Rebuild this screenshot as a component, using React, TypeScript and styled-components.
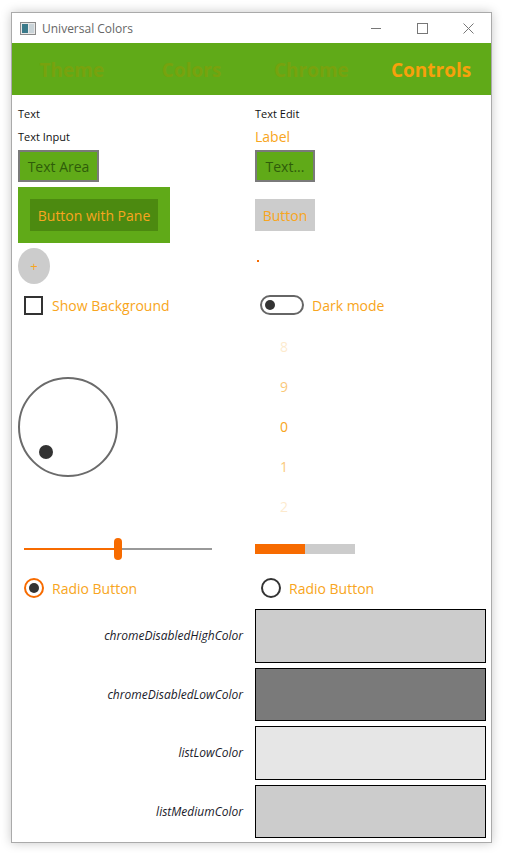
import styled, { createGlobalStyle } from 'styled-components';

const GREEN = '#60aa18';
const ORANGE = '#f8a520';
const ACCENT = '#f76b00';

const GlobalStyle = createGlobalStyle`
  html, body {
    margin: 0;
    padding: 0;
    background: #ffffff;
  }
  body {
    font-family: "Open Sans", "Noto Sans", sans-serif;
  }
`;

const Page = styled.div`
  width: 506px;
  height: 853px;
  padding: 12px 0 0 11px;
  box-sizing: border-box;
`;

const Window = styled.div`
  width: 481px;
  height: 831px;
  box-sizing: border-box;
  border: 1px solid #aaaaaa;
  box-shadow: 0 0 10px rgba(0, 0, 0, 0.22);
  background: #ffffff;
  display: flex;
  flex-direction: column;
  overflow: hidden;
`;

const TitleBar = styled.div`
  height: 30px;
  display: flex;
  align-items: center;
  padding-left: 8px;
  color: #666666;
  font-size: 12px;
`;

const TitleText = styled.span`
  margin-left: 6px;
  flex: 1;
`;

const WinButton = styled.div`
  width: 46px;
  height: 30px;
  display: flex;
  align-items: center;
  justify-content: center;
`;

const TabBar = styled.div`
  height: 52px;
  background: ${GREEN};
  display: grid;
  grid-template-columns: repeat(4, 1fr);
  align-items: center;
`;

const Tab = styled.div<{ $active?: boolean }>`
  text-align: center;
  font-size: 19px;
  font-weight: 700;
  color: ${(p) => (p.$active ? '#f7a10c' : '#78a20e')};
  padding-top: 2px;
`;

const Content = styled.div`
  padding: 8px 0 0 6px;
  display: flex;
  flex-direction: column;
`;

const Row = styled.div<{ $h: number; $mt?: number }>`
  display: grid;
  grid-template-columns: 237px 1fr;
  align-items: center;
  height: ${(p) => p.$h}px;
  margin-top: ${(p) => p.$mt ?? 0}px;
`;

const Cell = styled.div`
  display: flex;
  align-items: center;
  height: 100%;
`;

const Caption = styled.div`
  font-size: 11px;
  color: #111111;
`;

const OrangeText = styled.span`
  font-size: 14px;
  color: ${ORANGE};
`;

const GreenBox = styled.div<{ $w: number }>`
  width: ${(p) => p.$w}px;
  height: 32px;
  box-sizing: border-box;
  border: 2px solid #7a7a7a;
  background: ${GREEN};
  color: #2f5c0a;
  font-size: 14px;
  display: flex;
  align-items: center;
  justify-content: center;
`;

const Pane = styled.div`
  width: 152px;
  height: 56px;
  background: ${GREEN};
  display: flex;
  align-items: center;
  justify-content: center;
`;

const PaneButton = styled.div`
  width: 128px;
  height: 32px;
  background: #4c8a10;
  color: ${ORANGE};
  font-size: 14px;
  display: flex;
  align-items: center;
  justify-content: center;
`;

const GrayButton = styled.div`
  width: 60px;
  height: 32px;
  background: #cccccc;
  color: ${ORANGE};
  font-size: 14px;
  display: flex;
  align-items: center;
  justify-content: center;
`;

const RoundButton = styled.div`
  width: 32px;
  height: 36px;
  border-radius: 50%;
  background: #cccccc;
  color: ${ORANGE};
  font-size: 13px;
  display: flex;
  align-items: center;
  justify-content: center;
`;

const Dot = styled.div`
  width: 2px;
  height: 2px;
  background: ${ACCENT};
  margin: 0 0 10px 2px;
`;

const Check = styled.div`
  width: 19px;
  height: 19px;
  box-sizing: border-box;
  border: 2px solid #333333;
  margin: 0 9px 0 6px;
`;

const Toggle = styled.div`
  width: 44px;
  height: 20px;
  box-sizing: border-box;
  border: 2px solid #666666;
  border-radius: 10px;
  display: flex;
  align-items: center;
  padding-left: 3px;
  margin: 0 8px 0 5px;
`;

const Knob = styled.div`
  width: 10px;
  height: 10px;
  border-radius: 50%;
  background: #333333;
`;

const Tumbler = styled.div`
  width: 58px;
  display: flex;
  flex-direction: column;
  align-items: center;
`;

const TumblerItem = styled.div<{ $o: number }>`
  height: 40px;
  line-height: 40px;
  font-size: 14px;
  color: ${ORANGE};
  opacity: ${(p) => p.$o};
`;

const Slider = styled.div`
  width: 188px;
  margin-left: 6px;
  height: 22px;
  display: flex;
  align-items: center;
`;

const Track = styled.div<{ $color: string }>`
  height: 2px;
  flex: ${(p) => (p.$color === ACCENT ? '0 0 90px' : '1')};
  background: ${(p) => p.$color};
`;

const Thumb = styled.div`
  width: 8px;
  height: 22px;
  border-radius: 4px;
  background: ${ACCENT};
`;

const Progress = styled.div`
  width: 100px;
  height: 10px;
  background: #cccccc;
`;

const Radio = styled.div<{ $checked?: boolean }>`
  width: 20px;
  height: 20px;
  box-sizing: border-box;
  border-radius: 50%;
  border: 2px solid ${(p) => (p.$checked ? ACCENT : '#333333')};
  display: flex;
  align-items: center;
  justify-content: center;
  margin: 0 8px 0 6px;
`;

const RadioDot = styled.div`
  width: 10px;
  height: 10px;
  border-radius: 50%;
  background: #333333;
`;

const Swatches = styled.div`
  display: flex;
  flex-direction: column;
  gap: 5px;
  margin-top: 9px;
`;

const SwatchRow = styled.div`
  display: grid;
  grid-template-columns: 225px 231px;
  column-gap: 12px;
  align-items: center;
`;

const SwatchLabel = styled.div`
  text-align: right;
  font-size: 12px;
  font-style: italic;
  color: #1a1a2a;
`;

const SwatchBox = styled.div<{ $bg: string }>`
  height: 53.5px;
  box-sizing: border-box;
  border: 1.5px solid #000000;
  background: ${(p) => p.$bg};
`;

const swatches = [
  { name: 'chromeDisabledHighColor', bg: '#cccccc' },
  { name: 'chromeDisabledLowColor', bg: '#7a7a7a' },
  { name: 'listLowColor', bg: '#e6e6e6' },
  { name: 'listMediumColor ', bg: '#cccccc' },
];

const tumbler = [
  { n: '8', o: 0.22 },
  { n: '9', o: 0.6 },
  { n: '0', o: 1 },
  { n: '1', o: 0.6 },
  { n: '2', o: 0.22 },
];

export default function App() {
  return (
    <>
      <GlobalStyle />
      <Page>
        <Window>
          <TitleBar>
            <svg width="16" height="13" viewBox="0 0 16 13">
              <rect x="0.5" y="0.5" width="15" height="12" fill="#e8e8e8" stroke="#8a8a8a" />
              <rect x="2" y="2" width="6" height="9" fill="#3b7a8a" />
              <rect x="9" y="2" width="5" height="9" fill="#c9d3d8" />
            </svg>
            <TitleText>Universal Colors</TitleText>
            <WinButton>
              <svg width="10" height="10" viewBox="0 0 10 10">
                <line x1="0" y1="5.5" x2="10" y2="5.5" stroke="#777" strokeWidth="1" />
              </svg>
            </WinButton>
            <WinButton>
              <svg width="11" height="11" viewBox="0 0 11 11">
                <rect x="0.5" y="0.5" width="10" height="10" fill="none" stroke="#777" strokeWidth="1" />
              </svg>
            </WinButton>
            <WinButton>
              <svg width="11" height="11" viewBox="0 0 11 11">
                <path d="M0.5 0.5 L10.5 10.5 M10.5 0.5 L0.5 10.5" stroke="#777" strokeWidth="1" />
              </svg>
            </WinButton>
          </TitleBar>
          <TabBar>
            <Tab>Theme</Tab>
            <Tab>Colors</Tab>
            <Tab>Chrome</Tab>
            <Tab $active>Controls</Tab>
          </TabBar>
          <Content>
            <Row $h={20}>
              <Caption>Text</Caption>
              <Caption>Text Edit</Caption>
            </Row>
            <Row $h={20} $mt={3}>
              <Caption>Text Input</Caption>
              <OrangeText>Label</OrangeText>
            </Row>
            <Row $h={32} $mt={4}>
              <Cell>
                <GreenBox $w={81}>Text Area</GreenBox>
              </Cell>
              <Cell>
                <GreenBox $w={60}>Text...</GreenBox>
              </Cell>
            </Row>
            <Row $h={56} $mt={5}>
              <Cell>
                <Pane>
                  <PaneButton>Button with Pane</PaneButton>
                </Pane>
              </Cell>
              <Cell>
                <GrayButton>Button</GrayButton>
              </Cell>
            </Row>
            <Row $h={36} $mt={5}>
              <Cell>
                <RoundButton>+</RoundButton>
              </Cell>
              <Cell>
                <Dot />
              </Cell>
            </Row>
            <Row $h={24} $mt={9}>
              <Cell>
                <Check />
                <OrangeText>Show Background</OrangeText>
              </Cell>
              <Cell>
                <Toggle>
                  <Knob />
                </Toggle>
                <OrangeText>Dark mode</OrangeText>
              </Cell>
            </Row>
            <Row $h={200} $mt={10}>
              <Cell>
                <svg width="100" height="100" viewBox="0 0 100 100">
                  <circle cx="50" cy="50" r="49" fill="none" stroke="#6b6b6b" strokeWidth="2" />
                  <circle cx="28" cy="75" r="7" fill="#333333" />
                </svg>
              </Cell>
              <Cell>
                <Tumbler>
                  {tumbler.map((t) => (
                    <TumblerItem key={t.n} $o={t.o}>
                      {t.n}
                    </TumblerItem>
                  ))}
                </Tumbler>
              </Cell>
            </Row>
            <Row $h={24} $mt={10}>
              <Cell>
                <Slider>
                  <Track $color={ACCENT} />
                  <Thumb />
                  <Track $color="#999999" />
                </Slider>
              </Cell>
              <Cell>
                <Progress>
                  <div style={{ width: '50%', height: '100%', background: ACCENT }} />
                </Progress>
              </Cell>
            </Row>
            <Row $h={24} $mt={15}>
              <Cell>
                <Radio $checked>
                  <RadioDot />
                </Radio>
                <OrangeText>Radio Button</OrangeText>
              </Cell>
              <Cell>
                <Radio />
                <OrangeText>Radio Button</OrangeText>
              </Cell>
            </Row>
            <Swatches>
              {swatches.map((s) => (
                <SwatchRow key={s.name}>
                  <SwatchLabel>{s.name}</SwatchLabel>
                  <SwatchBox $bg={s.bg} />
                </SwatchRow>
              ))}
            </Swatches>
          </Content>
        </Window>
      </Page>
    </>
  );
}
